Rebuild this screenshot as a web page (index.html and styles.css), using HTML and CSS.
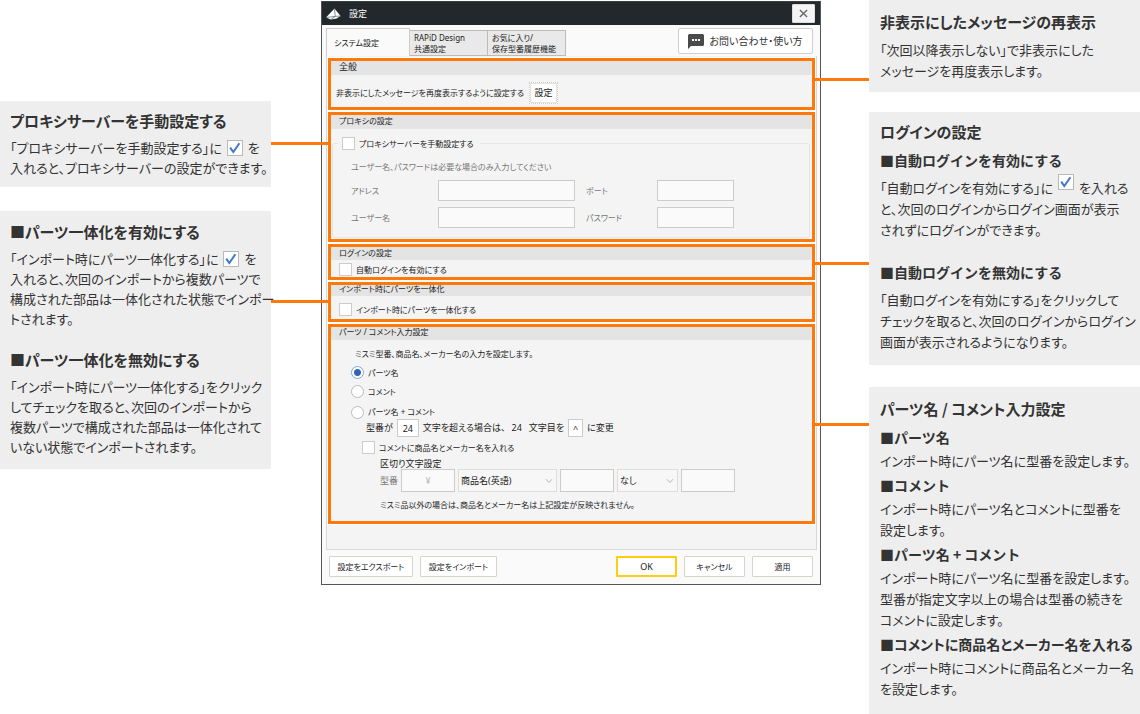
FILE: index.html
```html
<!DOCTYPE html>
<html lang="ja">
<head>
<meta charset="utf-8">
<meta name="viewport" content="width=device-width, initial-scale=1">
<title>設定</title>
<link rel="stylesheet" href="styles.css">
</head>
<body>
<svg class="defs" aria-hidden="true">
  <symbol id="tick" viewBox="0 0 16 16">
    <rect x="0.5" y="0.5" width="15" height="15" fill="#fff" stroke="#b9b9b9"/>
    <path d="M3.2 7.6 6.3 12 12.4 3.2" fill="none" stroke="#4478c4" stroke-width="2"/>
  </symbol>
  <symbol id="chevron" viewBox="0 0 8 6">
    <path d="M1 1.2 4 4.6 7 1.2" fill="none" stroke="#b5b5b5"/>
  </symbol>
</svg>
<div class="page">
  <aside class="notes notes-left">
    <section class="note">
      <h2>プロキシサーバーを手動設定する</h2>
      <p>「プロキシサーバーを手動設定する」に <svg class="tick"><use href="#tick"/></svg> を<br>入れると、プロキシサーバーの設定ができます。</p>
    </section>
    <section class="note tall">
      <h2>■パーツ一体化を有効にする</h2>
      <p>「インポート時にパーツ一体化する」に <svg class="tick"><use href="#tick"/></svg> を<br>入れると、次回のインポートから複数パーツで<br>構成された部品は一体化された状態でインポー<br>トされます。</p>
      <h2 class="later">■パーツ一体化を無効にする</h2>
      <p>「インポート時にパーツ一体化する」をクリック<br>してチェックを取ると、次回のインポートから<br>複数パーツで構成された部品は一体化されて<br>いない状態でインポートされます。</p>
    </section>
  </aside>

  <main class="dialog">
    <header class="titlebar">
      <svg class="logo" viewBox="0 0 15 12"><path d="M0 9.5 8.5 0.5 14.6 8 10.5 10.6 5 11.4Z" fill="#fff"/><path d="M8.5 .5 9.2 8.4 14.6 8M9.2 8.4 5 11.4M9.2 8.4 0 9.5" fill="none" stroke="#555b60" stroke-width=".7"/></svg>
      <h1>設定</h1>
      <button class="close" aria-label="閉じる"><svg viewBox="0 0 10 10"><path d="M1 1 9 9M9 1 1 9" stroke="#666" stroke-width="1.5"/></svg></button>
    </header>
    <div class="toolbar">
      <div class="tabs" role="tablist">
        <button class="tab active" role="tab" aria-selected="true">システム設定</button>
        <button class="tab" role="tab">RAPiD Design<br>共通設定</button>
        <button class="tab" role="tab">お気に入り/<br>保存型番履歴機能</button>
      </div>
      <button class="help"><svg viewBox="0 0 16 15"><path d="M1.500 0h13A1.500 1.500 0 0 1 16 1.500v9a1.500 1.500 0 0 1-1.500 1.500H3L0 15V1.500A1.500 1.500 0 0 1 1.500 0Z" fill="#4a4a4a"/><path d="M4 5h2v2H4zM7 5h2v2H7zM10 5h2v2h-2z" fill="#fff"/></svg>お問い合わせ・使い方</button>
    </div>
    <div class="panel">
      <section class="group general link-right">
        <h2>全般</h2>
        <div class="row"><span>非表示にしたメッセージを再度表示するように設定する</span><button class="mini">設定</button></div>
      </section>

      <section class="group proxy link-left">
        <h2>プロキシの設定</h2>
        <fieldset>
          <legend><label class="check"><input type="checkbox">プロキシサーバーを手動設定する</label></legend>
          <p>ユーザー名、パスワードは必要な場合のみ入力してください</p>
          <div class="fields">
            <label for="addr">アドレス</label><input id="addr" type="text">
            <label for="port">ポート</label><input id="port" type="text">
            <label for="user">ユーザー名</label><input id="user" type="text">
            <label for="pass">パスワード</label><input id="pass" type="password">
          </div>
        </fieldset>
      </section>

      <section class="group login link-right">
        <h2>ログインの設定</h2>
        <label class="check"><input type="checkbox">自動ログインを有効にする</label>
      </section>

      <section class="group merge link-left">
        <h2>インポート時にパーツを一体化</h2>
        <label class="check"><input type="checkbox">インポート時にパーツを一体化する</label>
      </section>

      <section class="group comment link-right">
        <h2>パーツ / コメント入力設定</h2>
        <div class="body">
          <p class="lead">ミスミ型番、商品名、メーカー名の入力を設定します。</p>
          <label class="check radio"><input type="radio" name="target" checked>パーツ名</label>
          <label class="check radio"><input type="radio" name="target">コメント</label>
          <label class="check radio last"><input type="radio" name="target">パーツ名 + コメント</label>
          <div class="limit">
            <label for="len">型番が</label><input id="len" type="text" value="24">
            <span>文字を超える場合は、</span><span class="count">24</span>
            <label for="mark">文字目を</label><input id="mark" type="text" value="^"><span>に変更</span>
          </div>
          <label class="check extra"><input type="checkbox">コメントに商品名とメーカー名を入れる</label>
          <div class="sub">
            <p class="caption">区切り文字設定</p>
            <div class="parts">
              <label for="sep">型番</label><input id="sep" type="text" value="¥" disabled>
              <span class="pick wide"><select aria-label="項目1"><option>商品名(英語)</option></select><svg><use href="#chevron"/></svg></span>
              <input type="text" aria-label="区切り文字1">
              <span class="pick"><select aria-label="項目2"><option>なし</option></select><svg><use href="#chevron"/></svg></span>
              <input type="text" aria-label="区切り文字2">
            </div>
            <p class="remark">ミスミ品以外の場合は、商品名とメーカー名は上記設定が反映されません。</p>
          </div>
        </div>
      </section>
    </div>
    <footer class="actions">
      <button class="export">設定をエクスポート</button>
      <button class="import">設定をインポート</button>
      <span class="spacer"></span>
      <button class="ok">OK</button>
      <button>キャンセル</button>
      <button>適用</button>
    </footer>
  </main>

  <aside class="notes notes-right">
    <section class="note">
      <h2>非表示にしたメッセージの再表示</h2>
      <p>「次回以降表示しない」で非表示にした<br>メッセージを再度表示します。</p>
    </section>
    <section class="note">
      <h2>ログインの設定</h2>
      <h3>■自動ログインを有効にする</h3>
      <p>「自動ログインを有効にする」に <svg class="tick raised"><use href="#tick"/></svg> を入れる<br>と、次回のログインからログイン画面が表示<br>されずにログインができます。</p>
      <h3 class="later">■自動ログインを無効にする</h3>
      <p>「自動ログインを有効にする」をクリックして<br>チェックを取ると、次回のログインからログイン<br>画面が表示されるようになります。</p>
    </section>
    <section class="note compact">
      <h2>パーツ名 / コメント入力設定</h2>
      <h3>■パーツ名</h3>
      <p>インポート時にパーツ名に型番を設定します。</p>
      <h3>■コメント</h3>
      <p>インポート時にパーツ名とコメントに型番を<br>設定します。</p>
      <h3>■パーツ名 + コメント</h3>
      <p>インポート時にパーツ名に型番を設定します。<br>型番が指定文字以上の場合は型番の続きを<br>コメントに設定します。</p>
      <h3 class="long">■コメントに商品名とメーカー名を入れる</h3>
      <p>インポート時にコメントに商品名とメーカー名<br>を設定します。</p>
    </section>
  </aside>
</div>
</body>
</html>
```
FILE: styles.css
```css
* { box-sizing: border-box; }
body {
  margin: 0;
  background: #fff;
  color: #333;
  font-family: "Noto Sans CJK JP", sans-serif;
  font-feature-settings: "palt";
}
h1, h2, h3, p { margin: 0; }
button, input, select { font: inherit; font-feature-settings: inherit; color: inherit; margin: 0; padding: 0; border-radius: 0; }
.defs { display: none; }

.page {
  display: grid;
  grid-template-columns: 271px minmax(0, 1fr) 271px;
  align-items: start;
}

/* Explanatory notes */
.notes { display: flex; flex-direction: column; }
.notes-left { padding-top: 101px; gap: 24px; }
.notes-right { gap: 20px; }
.note { background: #eee; padding: 10px 0 9px 10px; white-space: nowrap; }
.note h2, .note h3 { font-size: 15px; line-height: 20px; font-weight: 700; }
.note h3 { font-size: 14px; font-feature-settings: normal; }
.note .long { font-feature-settings: "palt"; }
.note p { font-size: 13px; line-height: 20px; margin-top: 7px; }
.note h2 + h3 { margin-top: 8px; }
.note .later { margin-top: 21px; }
.tall { padding: 11px 0 12px 10px; }
.notes-right .note { padding: 10px 0 13px 11px; }
.notes-right .note p { line-height: 21px; }
.notes-right .note:first-child { padding: 12px 0 11px 11px; }
.notes-right .later { margin-top: 22px; }
.notes-right .compact { margin-top: 2px; padding: 12px 0 15px 11px; }
.notes-right .compact p { margin-top: 3px; }
.compact p + h3 { margin-top: 4px; }
.tick { width: 16px; height: 16px; vertical-align: middle; margin: -6px 2px -3px; }
.raised { margin-top: -12px; margin-bottom: 2px; }

/* Settings dialog */
.dialog {
  margin: 1px 48px 0 50px;
  border: 1px solid #555;
  border-top: 0;
  background: #fafafa;
  color: #222;
  font-family: "Noto Sans", "Noto Sans CJK JP", sans-serif;
  font-size: 8px;
  line-height: 12px;
  white-space: nowrap;
}
.titlebar {
  display: flex;
  align-items: center;
  height: 24px;
  padding: 0 5px 0 4px;
  background: #23282c;
  border-top: 1px solid #3a443f;
  color: #fff;
}
.logo { width: 15px; height: 12px; margin-right: 8px; }
.titlebar h1 { font-size: 9px; font-weight: 400; }
.close {
  display: flex; align-items: center; justify-content: center;
  width: 23px; height: 19px; margin-left: auto;
  background: #f4f4f4; border: 1px solid #ddd; border-radius: 1px;
}
.close svg { width: 9px; height: 9px; }

.toolbar { display: flex; justify-content: space-between; align-items: flex-start; padding: 3px 7px 0 4px; }
.tabs { display: flex; align-items: flex-end; height: 28px; }
.tab {
  width: 78px; height: 26px; padding: 0 4px; text-align: left; line-height: 11px;
  background: #e9e9e9; border: 1px solid #bbb; border-left-width: 0;
}
.tab.active { width: 84px; height: 28px; padding: 0 7px; background: #fafafa; border: 1px solid #ccc; border-bottom: 0; }
.help {
  display: flex; align-items: center; justify-content: center; gap: 5px;
  width: 135px; height: 26px; background: #fff;
  border: 1px solid #d0d0d0; border-radius: 2px; font-size: 10px; color: #333;
}
.help svg { width: 16px; height: 15px; }

.panel {
  display: flex; flex-direction: column; gap: 2px;
  margin: 0 3px 0 4px; padding: 2px 1px 25px;
  background: #f4f4f4; border: 1px solid #d8d8d8; border-top: 0;
}
.group { position: relative; border: 3px solid #ff780a; background: #f4f4f4; outline: 1px solid #fff; }
.group h2 { height: 14px; padding-left: 8px; background: #e4e4e4; font-size: 8px; font-weight: 400; line-height: 12px; }
.group.general h2 { font-size: 9px; }
/* Connector from a group to its note */
.group::after { content: ""; position: absolute; height: 3px; background: #ff780a; }
.link-left::after { right: 100%; width: 60px; }
.link-right::after { left: 100%; width: 57px; }
.general::after { top: 17px; }
.proxy::after { top: 27px; }
.login::after { top: 15px; }
.merge::after { top: 15px; }
.comment::after { top: 96px; }

.row { display: flex; align-items: center; gap: 5px; padding: 7px 4px 3px 5px; }
.mini { width: 29px; height: 22px; font-size: 9px; background: #fdfdfd; border: 1px dotted #ccc; outline: 1px solid #e5e5dd; outline-offset: -2px; }

.check { display: flex; align-items: center; gap: 4px; }
.check input { appearance: none; flex: none; width: 13px; height: 13px; background: #fff; border: 1px solid #ccc; }
.radio input { border-radius: 50%; border-color: #bbb; }
.radio input:checked { border-color: #8aa6d6; background: radial-gradient(circle, #2f66b8 0 3px, #fff 4px); }
input[type="text"], input[type="password"] { width: 100%; min-width: 0; background: #fafafa; border: 1px solid #ccc; }

.proxy fieldset { margin: 8px 2px 1px 1px; padding: 0 0 9px 18px; border: 1px solid #e6e6e6; border-radius: 3px; color: #777; min-width: 0; }
.proxy legend { margin-left: -13px; padding: 0 6px 0 4px; color: #222; }
.proxy fieldset p { margin-top: 11px; }
.fields { display: grid; grid-template-columns: 87px 137px 82px 77px; row-gap: 6px; align-items: center; margin-top: 7px; }
.fields input { height: 21px; }
.fields label:nth-of-type(even) { padding-left: 11px; }

.login { height: 36px; }
.login h2 { height: 13px; line-height: 11px; }
.login .check { padding: 3px 0 4px 8px; }
.merge h2 { height: 11px; line-height: 8px; }
.merge .check { padding: 7px 0 3px 8px; }
.comment h2 { height: 13px; line-height: 10px; }

.body { padding: 8px 20px 10px; }
.lead { padding-left: 4px; }
.radio { height: 19px; }
.lead + .radio { margin-top: 3px; }
.radio.last { margin-top: 2px; height: 18px; }
.limit { display: flex; align-items: center; gap: 4px; padding-left: 15px; height: 18px; margin-top: -2px; font-size: 9px; }
.limit input { height: 18px; text-align: center; background: #fff; }
#len { width: 22px; }
#mark { width: 15px; }
.count { margin: 0 3px 0 2px; }
.extra { margin: 4px 0 0 11px; }
.sub { padding-left: 29px; }
.caption { margin-top: 5px; font-size: 9px; line-height: 10px; }
.parts { display: flex; align-items: center; gap: 3px; height: 23px; color: #777; font-size: 9px; }
.parts input { width: 54px; height: 23px; text-align: center; color: #bbb; }
.pick { position: relative; width: 61px; height: 23px; }
.pick.wide { width: 99px; }
.pick select { appearance: none; width: 100%; height: 100%; padding: 0 2px; background: #f7f7f7; border: 1px solid #ddd; color: #222; }
.pick svg { position: absolute; right: 4px; top: 9px; width: 8px; height: 6px; pointer-events: none; }
.remark { margin-top: 7px; }

.actions { display: flex; gap: 7px; padding: 6px 7px 7px; }
.actions button { width: 61px; height: 21px; background: #fff; border: 1px solid #d5d5cc; border-radius: 1px; }
.actions .export { width: 84px; }
.actions .import { width: 77px; }
.actions .ok { border: 2px solid #ffcc10; font-size: 9px; }
.spacer { flex: 1; }
```
